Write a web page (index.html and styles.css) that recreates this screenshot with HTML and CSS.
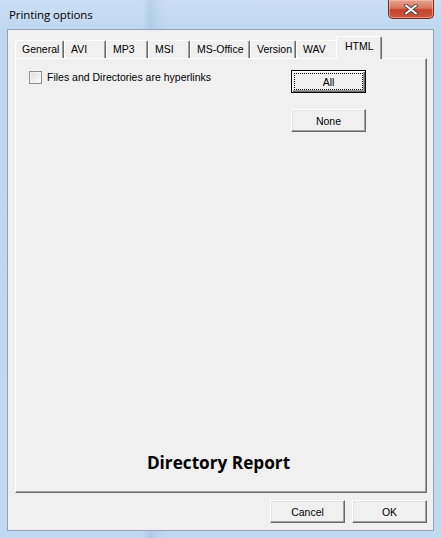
FILE: index.html
```html
<!DOCTYPE html>
<html>
<head>
<meta charset="utf-8">
<title>Printing options</title>
<link rel="stylesheet" href="styles.css">
</head>
<body>
<div class="window">
  <div class="titlebar">
    <span class="title">Printing options</span>
    <button class="close" aria-label="Close">
      <svg width="14" height="11" viewBox="0 0 14 11">
        <path d="M2 1.5 L12 9.5 M12 1.5 L2 9.5" stroke="#4a3a36" stroke-width="3.6" stroke-linecap="round"/>
        <path d="M2 1.5 L12 9.5 M12 1.5 L2 9.5" stroke="#ffffff" stroke-width="2" stroke-linecap="round"/>
      </svg>
    </button>
  </div>
  <div class="client">
    <div class="tabs">
      <div class="tab w49">General</div>
      <div class="tab w42">AVI</div>
      <div class="tab w42">MP3</div>
      <div class="tab w42">MSI</div>
      <div class="tab w60">MS-Office</div>
      <div class="tab w46">Version</div>
      <div class="tab w42">WAV</div>
      <div class="tab selected">HTML</div>
    </div>
    <div class="panel">
      <div class="options">
        <label class="check">
          <span class="box"></span>
          <span class="check-label">Files and Directories are hyperlinks</span>
        </label>
        <div class="side-buttons">
          <button class="btn default"><span class="focus">All</span></button>
          <button class="btn">None</button>
        </div>
      </div>
      <div class="report">Directory Report</div>
    </div>
    <div class="footer">
      <button class="btn">Cancel</button>
      <button class="btn">OK</button>
    </div>
  </div>
</div>
</body>
</html>
```

FILE: styles.css
```css
html, body {
  margin: 0;
  padding: 0;
}
body {
  width: 441px;
  height: 538px;
  overflow: hidden;
  font-family: "Liberation Sans", Arial, sans-serif;
  font-size: 10.5px;
  color: #000;
}
.window {
  width: 441px;
  height: 538px;
  display: flex;
  flex-direction: column;
  background:
    linear-gradient(90deg, rgba(120,150,185,0) 0px, rgba(120,150,185,0) 142px, rgba(120,150,185,0.2) 150px, rgba(120,150,185,0.08) 158px, rgba(120,150,185,0) 168px),
    linear-gradient(180deg, #cadff4 0px, #bfd7f0 30px, #c0d8f0 100%);
  box-sizing: border-box;
}
.titlebar {
  height: 29px;
  flex: none;
  display: flex;
  align-items: flex-start;
  justify-content: space-between;
}
.title {
  font-family: "Open Sans", "Liberation Sans", sans-serif;
  font-size: 11.5px;
  margin: 7px 0 0 9px;
  color: #000;
  letter-spacing: -0.1px;
}
.close {
  width: 46px;
  height: 19px;
  margin-right: 7px;
  padding: 0;
  border: 1px solid #7d2a1c;
  border-top: none;
  border-radius: 0 0 5px 5px;
  background: linear-gradient(180deg, #e8a692 0%, #d8755e 45%, #c4412a 55%, #c95a3f 100%);
  box-shadow: inset 0 0 0 1px rgba(255,200,185,0.55);
  display: flex;
  align-items: center;
  justify-content: center;
}
.client {
  flex: 1;
  margin: 0 7px 7px 7px;
  border: 1px solid #8fa3bb;
  background: #f0f0f0;
  display: flex;
  flex-direction: column;
  padding: 6px 6px 7px 7px;
}
.tabs {
  height: 22px;
  display: flex;
  align-items: flex-end;
  flex: none;
}
.tab {
  box-sizing: border-box;
  height: 18px;
  line-height: 17px;
  padding: 0 0 0 6px;
  border-top: 1px solid #fff;
  border-left: 1px solid #fff;
  border-right: 1px solid #696969;
  box-shadow: inset -1px 0 #a0a0a0;
  border-radius: 2px 2px 0 0;
  background: #f0f0f0;
  white-space: nowrap;
}
.w42 { width: 42px; }
.w46 { width: 46px; }
.w49 { width: 49px; }
.w60 { width: 60px; }
.tab.selected {
  width: 46px;
  height: 23px;
  margin: 0 -2px -1px -2px;
  padding-left: 8px;
  line-height: 18px;
  position: relative;
  z-index: 1;
}
.panel {
  flex: 1;
  display: flex;
  flex-direction: column;
  border-top: 1px solid #fff;
  border-left: 1px solid #fff;
  border-right: 1px solid #696969;
  border-bottom: 1px solid #696969;
  box-shadow: inset -1px -1px #a0a0a0;
  background: #f0f0f0;
  padding: 11px 60px 0 13px;
}
.options {
  display: flex;
  justify-content: space-between;
  align-items: flex-start;
}
.check {
  display: flex;
  align-items: center;
  margin-top: 1px;
}
.box {
  box-sizing: border-box;
  width: 13px;
  height: 13px;
  border: 1px solid #8e8f8f;
  background: linear-gradient(135deg, #dcdcdc 0%, #f4f4f4 70%, #fff 100%);
  box-shadow: inset 0 0 0 1px #f4f4f4;
  margin-right: 5px;
}
.check-label {
  line-height: 13px;
}
.side-buttons {
  display: flex;
  flex-direction: column;
  gap: 16px;
}
.btn {
  box-sizing: border-box;
  width: 75px;
  height: 23px;
  padding: 0;
  font-family: "Liberation Sans", Arial, sans-serif;
  font-size: 10.5px;
  color: #000;
  background: #f0f0f0;
  border: 1px solid;
  border-color: #fff #696969 #696969 #fff;
  box-shadow: inset -1px -1px #a0a0a0, inset 1px 1px #e3e3e3;
  display: flex;
  align-items: center;
  justify-content: center;
}
.btn.default {
  border: 1px solid #000;
  box-shadow: inset 1px 1px #fff, inset -1px -1px #696969, inset -2px -2px #a0a0a0;
  padding: 3px;
}
.focus {
  flex: 1;
  align-self: stretch;
  display: flex;
  align-items: center;
  justify-content: center;
  outline: 1px dotted #000;
  outline-offset: 0;
}
.report {
  margin-top: auto;
  margin-right: -42px;
  text-align: center;
  font-family: "Open Sans", "Noto Sans", sans-serif;
  font-weight: bold;
  font-size: 17.2px;
  padding-bottom: 18px;
  letter-spacing: 0;
}
.footer {
  flex: none;
  display: flex;
  justify-content: flex-end;
  gap: 7px;
  margin-top: 7px;
}
```
